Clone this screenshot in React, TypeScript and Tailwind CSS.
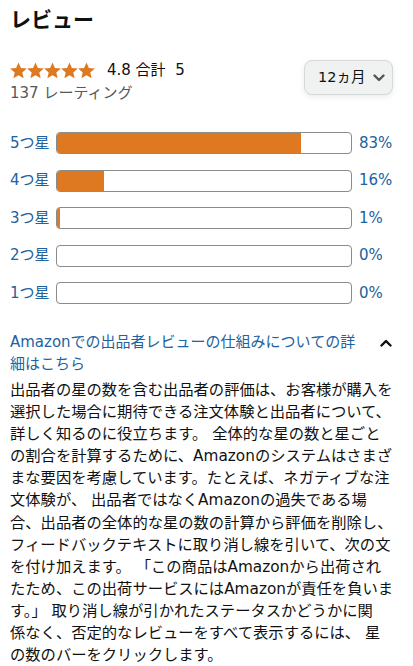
import React from 'react';

const bars = [
  { label: '5つ星', pct: 83 },
  { label: '4つ星', pct: 16 },
  { label: '3つ星', pct: 1 },
  { label: '2つ星', pct: 0 },
  { label: '1つ星', pct: 0 },
];

// lines as wrapped in the original widget
const bodyLines = [
  '出品者の星の数を含む出品者の評価は、お客様が購入を',
  '選択した場合に期待できる注文体験と出品者について、',
  '詳しく知るのに役立ちます。 全体的な星の数と星ごと',
  'の割合を計算するために、Amazonのシステムはさまざ',
  'まな要因を考慮しています。たとえば、ネガティブな注',
  '文体験が、 出品者ではなくAmazonの過失である場',
  '合、出品者の全体的な星の数の計算から評価を削除し、',
  'フィードバックテキストに取り消し線を引いて、次の文',
  'を付け加えます。 「この商品はAmazonから出荷され',
  'たため、この出荷サービスにはAmazonが責任を負いま',
  'す。」 取り消し線が引かれたステータスかどうかに関',
  '係なく、否定的なレビューをすべて表示するには、 星',
  'の数のバーをクリックします。',
];

function Star() {
  return (
    <svg width="17" height="17" viewBox="1 1 22 21.5" className="shrink-0">
      <path
        d="M12 1.5l3.1 7.1 7.7.6-5.9 5.1 1.8 7.6L12 17.8l-6.7 4.1 1.8-7.6-5.9-5.1 7.7-.6z"
        fill="#de7921"
      />
    </svg>
  );
}

function Chevron({ up, color }: { up?: boolean; color: string }) {
  return (
    <svg width="12" height="8" viewBox="0 0 12 8">
      <path
        d={up ? 'M1.5 6.5L6 2l4.5 4.5' : 'M1.5 1.5L6 6l4.5-4.5'}
        fill="none"
        stroke={color}
        strokeWidth="2.4"
        strokeLinecap="round"
        strokeLinejoin="round"
      />
    </svg>
  );
}

export default function App() {
  return (
    <div
      className="w-[413px] bg-white px-[10px] pt-[5px] text-[#0f1111]"
      style={{ fontFamily: '"DejaVu Sans", "Noto Sans CJK JP", sans-serif' }}
    >
      <h2 className="text-[21px] font-bold leading-[30px]">レビュー</h2>

      <div className="mt-[24px] flex items-start justify-between">
        <div>
          <div className="flex h-[22px] items-center">
            <div className="flex">
              {[0, 1, 2, 3, 4].map((i) => (
                <Star key={i} />
              ))}
            </div>
            <span className="ml-[12px] text-[15px]">4.8 合計&nbsp;&nbsp;5</span>
          </div>
          <div className="mt-[1px] text-[15px] leading-[22px] text-[#565959]">137 レーティング</div>
        </div>
        <button className="mr-[10px] mt-[1px] flex h-[35px] w-[89px] items-center justify-between rounded-[8px] border border-[#d5d9d9] bg-[#f0f2f2] pl-[13px] pr-[7px] text-[14.5px] shadow-[0_2px_5px_rgba(213,217,217,0.5)]">
          <span>12ヵ月</span>
          <Chevron color="#555" />
        </button>
      </div>

      <div className="mt-[28px] flex flex-col gap-[15.5px]">
        {bars.map((b) => (
          <div key={b.label} className="flex h-[22px] items-center text-[15px] text-[#2162a1]">
            <span className="w-[46px] shrink-0">{b.label}</span>
            <div className="h-[22px] w-[296px] shrink-0 overflow-hidden rounded-[4px] border border-[#888c8c] bg-white">
              <div className="h-full bg-[#de7921]" style={{ width: `${b.pct}%` }} />
            </div>
            <span className="ml-[7px]">{b.pct}%</span>
          </div>
        ))}
      </div>

      <div className="mt-[27px] flex items-start justify-between">
        <a className="w-[350px] text-[15px] leading-[22px] text-[#2162a1]">
          Amazonでの出品者レビューの仕組みについての詳細はこちら
        </a>
        <div className="mr-[11px] mt-[8px]">
          <Chevron up color="#0f1111" />
        </div>
      </div>

      <p className="mt-[4px] text-[15.3px] leading-[22.1px]">
        {bodyLines.map((line, i) => (
          <span key={i} className="block whitespace-nowrap">
            {line}
          </span>
        ))}
      </p>
    </div>
  );
}
